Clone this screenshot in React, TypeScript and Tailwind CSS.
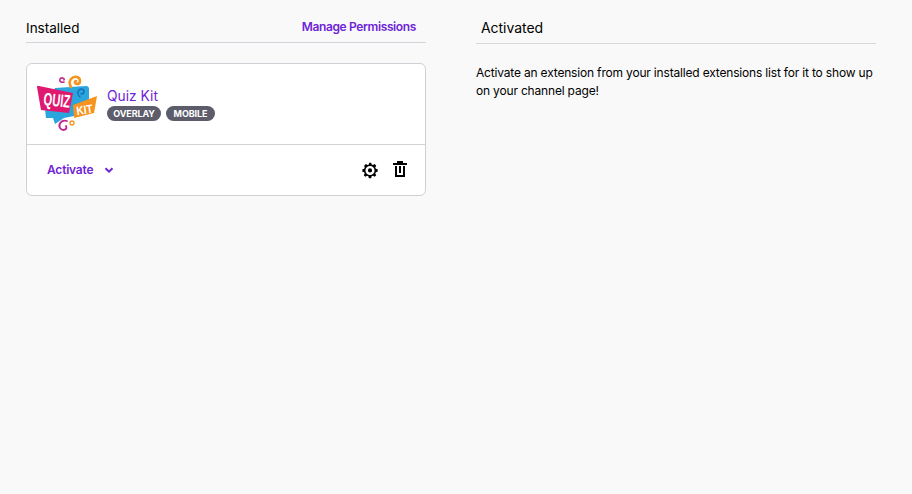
import React from 'react';

const QuizKitLogo: React.FC = () => (
    <svg width="62" height="58" viewBox="0 0 62 58" className="shrink-0">
        {/* blue speech bubble */}
        <path d="M19 13 L50 11 Q53 11 53 14 L53 38 L28 43 L19 49 L17 43 L10 43 L9 34 Z" fill="#2aa5de" />
        {/* pink bubble */}
        <path d="M1 12 Q1 10 3 11 L37 18 L33 38 L5 35 Z" fill="#e0186f" />
        {/* orange bubble */}
        <path d="M37 30 L61 21 L58 38 L38 43 Z" fill="#f7941e" />
        <text x="0" y="0" fontSize="18" fontWeight="700" fill="#ffffff" fontFamily="'Liberation Sans', sans-serif" transform="translate(7 30) rotate(6) scale(0.62 1)">QUIZ</text>
        <text x="0" y="0" fontSize="12" fontWeight="700" fill="#ffffff" fontFamily="'Liberation Sans', sans-serif" transform="translate(41 40) rotate(-8) scale(0.85 1)">KIT</text>
        {/* swirls */}
        <path d="M35 12 C31 5 37 1 41 2 C45 3 45 9 41 9 C39 9 38 7 40 6" fill="none" stroke="#f7941e" strokeWidth="2.6" strokeLinecap="round" />
        <path d="M28 7 C25 8 23 6 24 4 C25 2 29 3 28 5" fill="none" stroke="#c2248c" strokeWidth="1.6" strokeLinecap="round" />
        <path d="M44 22 C41 20 41 15 45 14 C49 14 49 19 45 19" fill="none" stroke="#1572b6" strokeWidth="1.5" strokeLinecap="round" />
        <path d="M31 46 C25 44 22 50 24 53 C27 57 32 54 30 51" fill="none" stroke="#c2248c" strokeWidth="1.8" strokeLinecap="round" />
        <circle cx="36" cy="48" r="2" fill="none" stroke="#f7941e" strokeWidth="1.3" />
    </svg>
);

const GearIcon: React.FC = () => (
    <svg width="20" height="20" viewBox="-1 -1.500 22 22" fill="#000000">
        <path
            fillRule="evenodd"
            d="M10 1.500h1.300l.5 2 1.500.6 1.800-1.100 1.800 1.800-1.100 1.800.6 1.500 2 .5v2.800l-2 .5-.6 1.500 1.100 1.800-1.800 1.800-1.800-1.100-1.500.6-.5 2H8.700l-.5-2-1.500-.6-1.800 1.100-1.800-1.800 1.100-1.800-.6-1.500-2-.5V8.600l2-.5.6-1.500L3.600 4.800l1.800-1.800 1.800 1.100 1.500-.6.5-2H10zm0 3.500a5 5 0 1 0 0 10 5 5 0 0 0 0-10zm0 2.700a2.300 2.300 0 1 1 0 4.600 2.300 2.300 0 0 1 0-4.600z"
        />
    </svg>
);

const TrashIcon: React.FC = () => (
    <svg width="20" height="20" viewBox="0 0 20 20" fill="#000000">
        <path d="M7 1h6v2h4v2H3V3h4V1zM5 6h2v9h6V6h2v11H5V6zm4 0h2v7H9V6z" />
    </svg>
);

const Tag: React.FC<{ label: string; className: string }> = ({ label, className }) => (
    <span className={`h-[15px] rounded-full bg-[#5c5c6b] text-white text-[9px] leading-[15px] font-bold text-center tracking-[-0.1px] ${className}`}>{label}</span>
);

export default function App() {
    return (
        <div className="w-[912px] h-[494px] bg-[#f9f9f9] text-black flex gap-[50px] pl-[26px] pt-[16px] font-['Inter','Liberation_Sans',sans-serif] overflow-hidden">
            <div className="w-[400px] shrink-0">
                <div className="h-[27px] flex items-start justify-between pr-[10px] border-b border-[#d3d3dc]">
                    <span className="text-[13.5px] leading-6">Installed</span>
                    <button className="text-xs leading-[22px] font-semibold text-[#6f24d7] tracking-[-0.37px]">Manage Permissions</button>
                </div>
                <div className="mt-[20px] h-[133px] rounded-md border border-[#cfcfd6] bg-white flex flex-col">
                    <div className="h-[81px] flex items-center pl-[9px] border-b border-[#d3d3d3]">
                        <QuizKitLogo />
                        <div className="ml-[9px] flex flex-col">
                            <span className="text-[13.8px] leading-[18px] text-[#6f24d7]">Quiz Kit</span>
                            <div className="flex gap-[5px] mt-px">
                                <Tag label="OVERLAY" className="w-[54px]" />
                                <Tag label="MOBILE" className="w-[49px]" />
                            </div>
                        </div>
                    </div>
                    <div className="flex-1 flex items-center justify-between pl-[20px] pr-[15px]">
                        <button className="flex items-center text-xs font-semibold text-[#6f24d7] tracking-[-0.2px]">
                            Activate
                            <svg width="10" height="10" viewBox="0 0 10 10" className="ml-[11px]">
                                <path d="M1.500 3.200 5 6.700l3.500-3.500" fill="none" stroke="#6f24d7" strokeWidth="2" />
                            </svg>
                        </button>
                        <div className="flex items-center gap-[10px]">
                            <GearIcon />
                            <TrashIcon />
                        </div>
                    </div>
                </div>
            </div>
            <div className="w-[400px] shrink-0">
                <div className="h-[28px] pl-[5px] border-b border-[#d8d8d8]">
                    <span className="text-sm leading-6 block tracking-[-0.05px]">Activated</span>
                </div>
                <p className="mt-[20px] text-xs leading-[18px] tracking-[-0.18px]">
                    Activate an extension from your installed extensions list for it to show up on your channel page!
                </p>
            </div>
        </div>
    );
}
